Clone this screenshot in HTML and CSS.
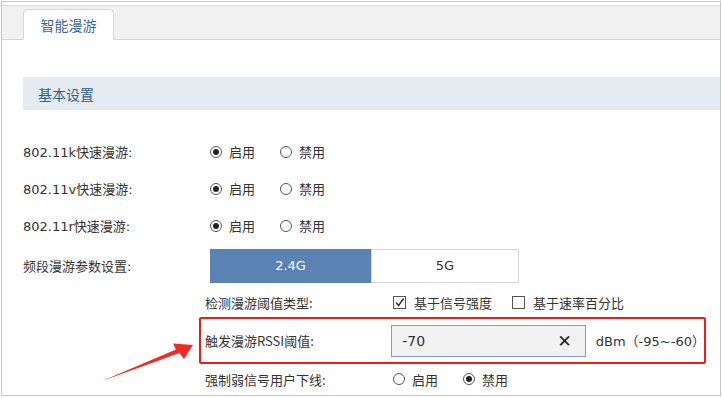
FILE: index.html
```html
<!DOCTYPE html>
<html lang="zh-CN">
<head>
    <meta charset="UTF-8">
    <title>智能漫游</title>
    <link rel="stylesheet" href="styles.css">
</head>
<body>
    <div class="frame">
        <div class="tab-bar">
            <div class="tab">智能漫游</div>
        </div>

        <div class="section-title">基本设置</div>

        <div class="form">
            <div class="row">
                <div class="label">802.11k快速漫游:</div>
                <div class="opts">
                    <span class="radio on"></span><span class="opt-text">启用</span>
                    <span class="radio"></span><span class="opt-text">禁用</span>
                </div>
            </div>
            <div class="row">
                <div class="label">802.11v快速漫游:</div>
                <div class="opts">
                    <span class="radio on"></span><span class="opt-text">启用</span>
                    <span class="radio"></span><span class="opt-text">禁用</span>
                </div>
            </div>
            <div class="row">
                <div class="label">802.11r快速漫游:</div>
                <div class="opts">
                    <span class="radio on"></span><span class="opt-text">启用</span>
                    <span class="radio"></span><span class="opt-text">禁用</span>
                </div>
            </div>
            <div class="row band-row">
                <div class="label">频段漫游参数设置:</div>
                <div class="band">
                    <div class="band-btn active">2.4G</div>
                    <div class="band-btn">5G</div>
                </div>
            </div>

            <div class="sub">
                <div class="sub-row check-row">
                    <div class="sub-label">检测漫游阈值类型:</div>
                    <div class="opts">
                        <span class="check on">
                            <svg width="11" height="11" viewBox="0 0 11 11"><path d="M2 5.5 L4.6 8.5 L9.6 1.5" fill="none" stroke="#333" stroke-width="1.5"/></svg>
                        </span><span class="opt-text wide">基于信号强度</span>
                        <span class="check"></span><span class="opt-text">基于速率百分比</span>
                    </div>
                </div>
                <div class="sub-row mark">
                    <div class="sub-label">触发漫游RSSI阈值:</div>
                    <div class="input">
                        <span class="input-val">-70</span>
                        <span class="clear">✕</span>
                    </div>
                    <span class="unit">dBm（-95~-60）</span>
                </div>
                <div class="sub-row last">
                    <div class="sub-label">强制弱信号用户下线:</div>
                    <div class="opts">
                        <span class="radio"></span><span class="opt-text">启用</span>
                        <span class="radio on"></span><span class="opt-text">禁用</span>
                    </div>
                </div>
            </div>
        </div>

        <!-- 标注箭头 -->
        <svg class="arrow" width="722" height="398" viewBox="0 0 722 398">
            <polygon points="102,381 176,349.5 173,343.5 193,345 184,359 179.5,353" fill="#ee2b24"/>
        </svg>
    </div>
</body>
</html>
```

FILE: styles.css
```css
body {
    margin: 0;
    padding: 1px 0 0 1px;
    background-color: #fff;
    font-family: "DejaVu Sans", "Noto Sans CJK SC", sans-serif;
    font-size: 13px;
    color: #333;
}

.frame {
    position: relative; /* 箭头覆盖层用 */
    width: 718px;
    height: 393px;
    border: 1px solid #c6c6c6;
}

.tab-bar {
    margin-top: 3px;
    height: 33px;
    background-color: #f1f1f1;
    border-top: 1px solid #dcdcdc;
    border-bottom: 1px solid #d6d6d6;
    display: flex;
    align-items: flex-end;
    padding-left: 21px;
}

.tab {
    width: 89px;
    height: 30px;
    margin-bottom: -1px;
    background-color: #fff;
    border: 1px solid #d6d6d6;
    border-bottom: none;
    border-radius: 5px 5px 0 0;
    display: flex;
    align-items: center;
    justify-content: center;
    font-family: "Noto Sans CJK SC", sans-serif;
    font-size: 14px;
    color: #3d6a97;
}

.section-title {
    margin: 37px 0 0 21px;
    height: 33px;
    background-color: #e4ecf2;
    padding-left: 15px;
    display: flex;
    align-items: center;
    font-family: "Noto Sans CJK SC", sans-serif;
    font-size: 14px;
    color: #2f5f8e;
}

.form {
    padding-left: 21px;
    margin-top: 23px;
}

.row {
    height: 37px;
    display: flex;
    align-items: center;
}

.band-row {
    height: 41px;
    padding-top: 2px;
    box-sizing: border-box;
}

.label {
    width: 187px;
}

.opts {
    display: flex;
    align-items: center;
}

.radio {
    width: 10px;
    height: 10px;
    border: 1px solid #555;
    border-radius: 50%;
    position: relative;
    margin-right: 7px;
}

.radio.on::after {
    content: "";
    position: absolute;
    left: 2px;
    top: 2px;
    width: 6px;
    height: 6px;
    border-radius: 50%;
    background-color: #222;
}

.opt-text {
    font-family: "Noto Sans CJK SC", sans-serif;
    margin-right: 25px;
}

.opt-text.wide {
    margin-right: 20px;
}

.band {
    display: flex;
    width: 309px;
    height: 34px;
}

.band-btn {
    flex: 1;
    display: flex;
    align-items: center;
    justify-content: center;
    border: 1px solid #d4d4d4;
    color: #333;
}

.band-btn.active {
    flex: 0 0 161px;
    box-sizing: border-box;
    background-color: #5a82b2;
    border-color: #5a82b2;
    color: #fff;
}

.sub {
    margin-left: 176px;
    width: 507px;
}

.sub-row {
    display: flex;
    align-items: center;
    padding-left: 6px;
}

.check-row {
    height: 32px;
    padding-top: 2px;
    box-sizing: border-box;
}

.sub-label {
    width: 188px;
    font-family: "Noto Sans CJK SC", sans-serif;
}

.check {
    width: 11px;
    height: 11px;
    border: 1px solid #555;
    margin-right: 8px;
    display: flex;
}

.mark {
    height: 43px;
    border: 2px solid #f01c16;
    border-radius: 2px;
    padding-left: 4px;
}

.input {
    display: flex;
    align-items: center;
    justify-content: space-between;
    padding: 0 13px 0 10px;
    box-sizing: border-box;
    width: 196px;
    height: 32px;
    border: 1px solid #7d9ec6;
    background-color: #f2f2f2;
}

.input-val {
    font-size: 14px;
    color: #333;
}

.clear {
    font-size: 17px;
    font-weight: bold;
    color: #222;
}

.unit {
    margin-left: 10px;
    color: #333;
}

.last {
    height: 30px;
}

.arrow {
    position: absolute;
    left: -2px;
    top: -2px;
    pointer-events: none;
}
```
